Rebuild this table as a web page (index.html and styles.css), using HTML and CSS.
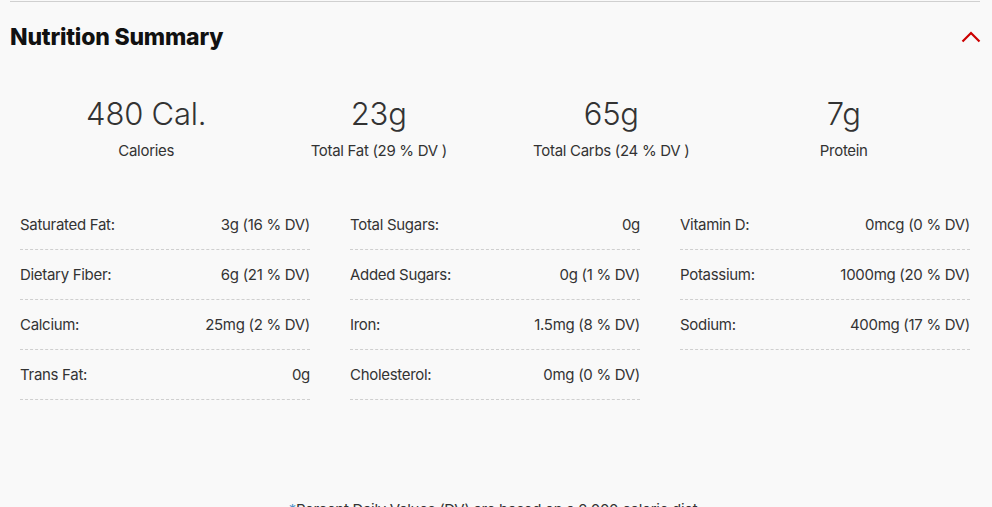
FILE: index.html
```html
<!DOCTYPE html>
<html lang="en">
<head>
    <meta charset="UTF-8">
    <meta name="viewport" content="width=device-width, initial-scale=1.0">
    <title>Nutrition Summary</title>
    <link rel="stylesheet" href="styles.css">
</head>
<body>
    <div class="panel">
        <!-- Header with collapse toggle -->
        <div class="panel-head">
            <h2>Nutrition Summary</h2>
            <button class="toggle" aria-label="Collapse">
                <svg width="20" height="12" viewBox="0 0 20 12" fill="none">
                    <path d="M1.5 10.5 L10 2 L18.5 10.5" stroke="#cc0000" stroke-width="2.2"/>
                </svg>
            </button>
        </div>

        <!-- Main figures -->
        <div class="stats">
            <div class="stat">
                <div class="value">480 Cal.</div>
                <div class="label">Calories</div>
            </div>
            <div class="stat">
                <div class="value">23g</div>
                <div class="label">Total Fat (29 % DV )</div>
            </div>
            <div class="stat">
                <div class="value">65g</div>
                <div class="label">Total Carbs (24 % DV )</div>
            </div>
            <div class="stat">
                <div class="value">7g</div>
                <div class="label">Protein</div>
            </div>
        </div>

        <!-- Detail rows -->
        <div class="details">
            <div class="col">
                <div class="row"><span>Saturated Fat:</span><span>3g (16 % DV)</span></div>
                <div class="row"><span>Dietary Fiber:</span><span>6g (21 % DV)</span></div>
                <div class="row"><span>Calcium:</span><span>25mg (2 % DV)</span></div>
                <div class="row"><span>Trans Fat:</span><span>0g</span></div>
            </div>
            <div class="col">
                <div class="row"><span>Total Sugars:</span><span>0g</span></div>
                <div class="row"><span>Added Sugars:</span><span>0g (1 % DV)</span></div>
                <div class="row"><span>Iron:</span><span>1.5mg (8 % DV)</span></div>
                <div class="row"><span>Cholesterol:</span><span>0mg (0 % DV)</span></div>
            </div>
            <div class="col">
                <div class="row"><span>Vitamin D:</span><span>0mcg (0 % DV)</span></div>
                <div class="row"><span>Potassium:</span><span>1000mg (20 % DV)</span></div>
                <div class="row"><span>Sodium:</span><span>400mg (17 % DV)</span></div>
            </div>
        </div>

        <p class="note"><span class="star">*</span>Percent Daily Values (DV) are based on a 2,000 calorie diet.</p>
    </div>
</body>
</html>
```

FILE: styles.css
```css
body {
    font-family: 'Inter', 'Liberation Sans', sans-serif;
    background-color: #f9f9f9;
    color: #333;
    margin: 0;
    padding: 0;
    letter-spacing: -0.3px;
}
.panel {
    margin: 1px 12px 0 10px;
    border-top: 1px solid #d0d0d0;
}
.panel-head {
    display: flex;
    justify-content: space-between;
    align-items: center;
    height: 70px;
}
.panel-head h2 {
    margin: 0;
    font-size: 23px;
    font-weight: 800;
    color: #111;
    letter-spacing: -0.2px;
}
.toggle {
    background: none;
    border: none;
    padding: 0;
    margin-right: -1px;
    cursor: pointer;
    display: flex;
}
.stats {
    display: grid;
    grid-template-columns: repeat(4, 1fr);
    padding: 23px 20px 0;
}
.stat {
    text-align: center;
}
.stat .value {
    font-size: 31px;
    font-weight: 300;
    color: #333;
    line-height: 38px;
    letter-spacing: -0.2px;
}
.stat .label {
    font-size: 15px;
    margin-top: 8px;
}
.details {
    display: grid;
    grid-template-columns: repeat(3, 290px);
    gap: 40px;
    padding: 40px 10px 0;
}
.row {
    display: flex;
    justify-content: space-between;
    font-size: 15px;
    height: 49px;
    line-height: 50px;
    border-bottom: 1px dashed #cfcfcf;
}
.note {
    text-align: center;
    font-size: 15px;
    margin: 100px 0 0;
}
.note .star {
    color: #4a90c8;
}
```
